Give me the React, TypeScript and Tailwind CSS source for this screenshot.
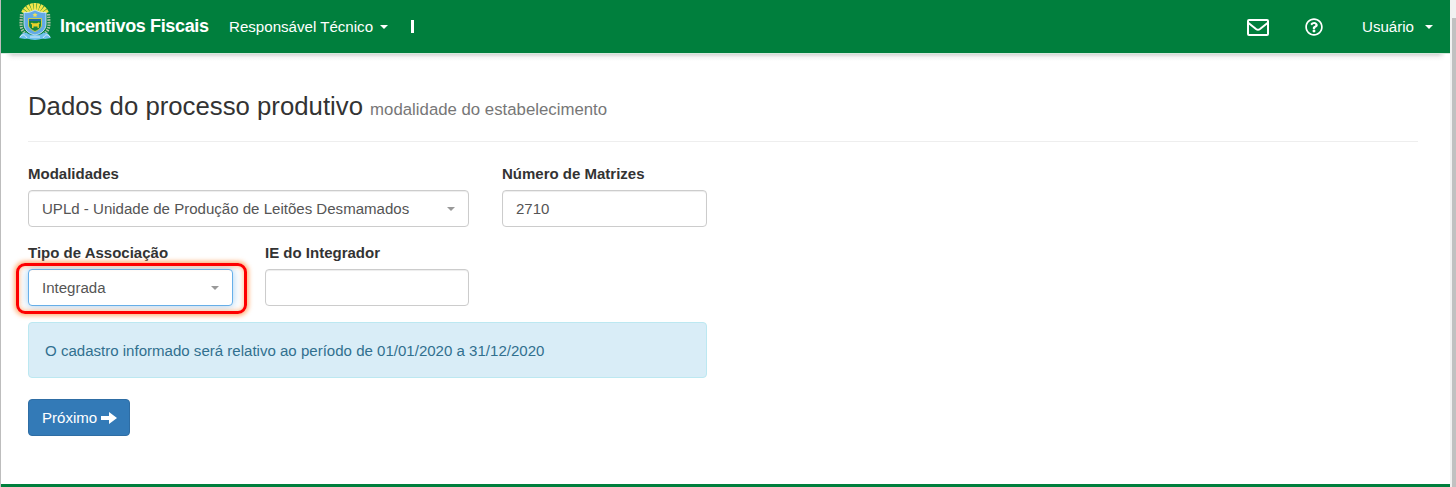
import type { ReactNode } from 'react';
import { FaRegQuestionCircle } from 'react-icons/fa';

function Caret({ className }: { className: string }) {
  return (
    <svg viewBox="0 0 8 4" className={`h-1 w-2 shrink-0 fill-current ${className}`} aria-hidden="true">
      <path d="M0 0h8L4 4z" />
    </svg>
  );
}

function Crest() {
  const rays = Array.from({ length: 9 }, (_, i) => -60 + i * 15);
  return (
    <svg viewBox="0 0 34 38" className="h-[38px] w-[34px] shrink-0" aria-hidden="true">
      {rays.map((a) => (
        <path key={a} d="M16.600 15 15.400 0h3.200L17.400 15z" fill="#f2e64a" transform={`rotate(${a} 17 15)`} />
      ))}
      <path d="M3.500 11 3 20c0 6 2 9 5 11M30.500 11l.5 9c0 6-2 9-5 11" fill="none" stroke="#a9bfa4" strokeWidth="3.200" strokeDasharray="1.600 1" />
      <path d="M1 35c2-5 5-6 8-5 3 2 5 2 8 2s5 0 8-2c3-1 6 0 8 5l-6 1c-4-1-6 1-10 1s-6-2-10-1z" fill="#6fc0ec" />
      <path d="M2 34c3-4 5-2 7 1M32 34c-3-4-5-2-7 1M12 34h10" fill="none" stroke="#d9edf8" strokeWidth="1" />
      <path d="M6 9.500c4 .5 7-.5 11-2.500 4 2 7 3 11 2.500V21c0 6-5 10-11 11C11 31 6 27 6 21z" fill="#62aae6" stroke="#cfe6f4" strokeWidth=".9" />
      <path d="M10.500 15.500h13V22c0 3-3 5-6.500 6.500-3.500-1.500-6.500-3.500-6.500-6.500z" fill="#14843f" stroke="#d8d646" strokeWidth=".9" />
      <path d="M11 16h12v2H11z" fill="#236ea4" />
      <path d="m12.500 20.500 1.500-1 1 .8h4l2-1 .9 1.200-1 .8V25h-1.400v-1.500h-4V25H14v-3.500z" fill="#e8cf2c" />
      <path d="m17 9.500.8 1.500 1.700.2-1.200 1.200.3 1.700-1.600-.8-1.600.8.3-1.700-1.200-1.200 1.700-.2z" fill="#eee05a" />
    </svg>
  );
}

function Field({ label, width, children }: { label: string; width: string; children: ReactNode }) {
  return (
    <div className={width}>
      <div className="h-[26px] text-[15px] leading-5 font-bold whitespace-nowrap text-[#333]">{label}</div>
      {children}
    </div>
  );
}

const box = 'flex h-[37px] w-full items-center justify-between rounded-[4px] border bg-white px-[13px] pt-px text-[15.050px] text-[#555]';
const plain = 'border-[#ccc] shadow-[inset_0_1px_1px_rgba(0,0,0,0.075)]';

export default function App() {
  return (
    <div className="flex h-[487px] w-full overflow-hidden bg-white font-['Liberation_Sans',Arial,sans-serif] text-[#333]">
      <div className="w-px bg-[#bdbdbd]" />
      <div className="flex min-w-0 flex-1 flex-col">
        <header className="flex h-[53px] shrink-0 items-start bg-[#007f3d] text-white">
          <div className="ml-[17px] mt-[3px]"><Crest /></div>
          <div className="ml-2 mt-[16px] w-[169px] text-[18px] leading-5 font-bold tracking-[-0.36px] whitespace-nowrap">Incentivos Fiscais</div>
          <div className="mt-[17px] flex w-[159px] items-center text-[15.100px] leading-5 whitespace-nowrap">
            <span>Responsável Técnico</span>
            <Caret className="ml-auto" />
          </div>
          <div className="ml-[23px] mt-[20px] h-[13px] w-[3px] bg-white" />
          <svg viewBox="0 0 22 18" className="mt-[19px] ml-auto h-[18px] w-[22px]" fill="none" stroke="white" strokeWidth="2" strokeLinejoin="round" aria-hidden="true">
            <rect x="1" y="1" width="20" height="15" rx="1" />
            <path d="m1.500 4 7.500 6q2 1.500 4 0l7.500-6" />
          </svg>
          <FaRegQuestionCircle className="mt-[18px] ml-[36px] size-[18px]" />
          <div className="mt-[17px] mr-[17px] ml-[39px] flex w-[71px] items-center text-[15.100px] leading-5">
            <span>Usuário</span>
            <Caret className="ml-auto" />
          </div>
        </header>
        <div className="h-px shrink-0 bg-[#d5e8dd]" />
        <div className="mx-1 h-[7px] shrink-0 bg-gradient-to-b from-[#d6d6d6] via-[#f5f5f5] via-50% to-white [mask-image:linear-gradient(to_right,transparent,black_8px,black_calc(100%-8px),transparent)]" />
        <main className="flex flex-1 flex-col items-start pl-[27px]">
          <h1 className="mt-[25px] h-[56px] w-[1390px] border-b border-[#eee] text-[25.750px] leading-10 whitespace-nowrap">
            Dados do processo produtivo <small className="text-[16.800px] text-[#777]">modalidade do estabelecimento</small>
          </h1>
          <div className="mt-[22px] flex gap-[33px]">
            <Field label="Modalidades" width="w-[441px]">
              <div className={`${box} ${plain}`}>
                <span>UPLd - Unidade de Produção de Leitões Desmamados</span>
                <Caret className="text-[#999]" />
              </div>
            </Field>
            <Field label="Número de Matrizes" width="w-[205px]">
              <div className={`${box} ${plain}`}>2710</div>
            </Field>
          </div>
          <div className="mt-[16px] flex gap-[32px]">
            <Field label="Tipo de Associação" width="w-[205px]">
              <div className="relative">
                <div className={`${box} border-[#66afe9] shadow-[0_0_8px_rgba(102,175,233,0.6)]`}>
                  <span>Integrada</span>
                  <Caret className="text-[#999]" />
                </div>
                <div className="pointer-events-none absolute -top-[6px] -right-[14px] -bottom-[8px] -left-[12px] rounded-[9px] border-[3px] border-[#fe0000] shadow-[0_0_4px_2px_rgba(255,145,65,0.65),inset_0_0_4px_1px_rgba(255,145,65,0.5)]" />
              </div>
            </Field>
            <Field label="IE do Integrador" width="w-[204px]">
              <div className={`${box} ${plain}`} />
            </Field>
          </div>
          <div className="mt-[16px] flex h-[56px] w-[679px] items-center rounded-[4px] border border-[#bce8f1] bg-[#d9edf7] px-[16px] pt-[2px] text-[15.050px] text-[#31708f]">
            O cadastro informado será relativo ao período de 01/01/2020 a 31/12/2020
          </div>
          <button className="mt-[21px] flex h-[37px] w-[102px] items-center rounded-[4px] border border-[#2e6da4] bg-[#337ab7] pl-[13px] text-[15.050px] text-white">
            <span className="w-[59px] pt-px text-left">Próximo</span>
            <svg viewBox="0 0 16 12" className="h-3 w-4 fill-current" aria-hidden="true">
              <path d="M0 4h8V0l8 6-8 6V8H0z" />
            </svg>
          </button>
        </main>
        <div className="h-[3px] shrink-0 bg-[#007f3d]" />
      </div>
      <div className="w-[2px] bg-[#f1f1f1]" />
      <div className="flex w-[4px] flex-col bg-[#f1f1f1]">
        <div className="mt-[18px] flex-1 bg-[#c1c1c1]" />
      </div>
    </div>
  );
}
